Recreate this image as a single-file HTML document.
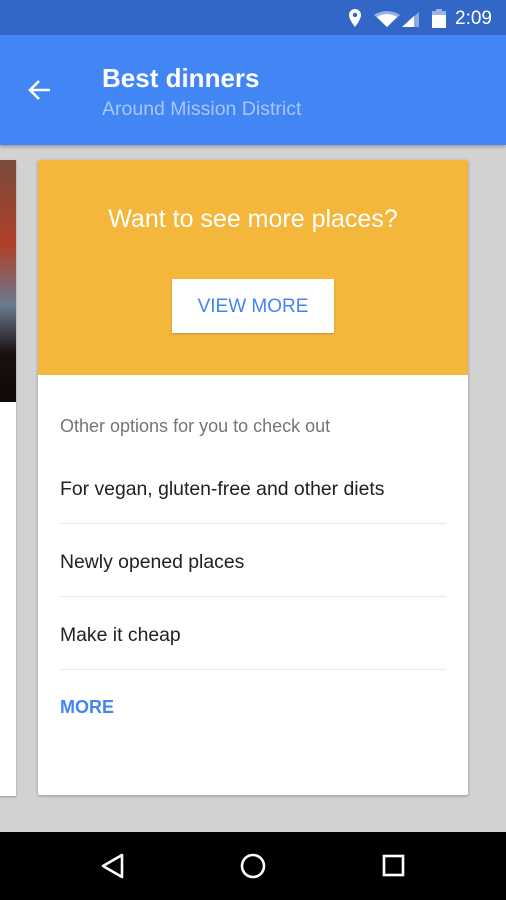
<!DOCTYPE html>
<html><head><style>
body{margin:0;width:506px;height:900px;position:relative;overflow:hidden;background:#d2d2d2;font-family:"Liberation Sans",sans-serif}
.abs{position:absolute}
</style></head><body>
<div class="abs" style="left:0;top:0;width:506px;height:35px;background:#3367c7"></div>
<div class="abs" style="left:0;top:35px;width:506px;height:110px;background:#4285f4;box-shadow:0 2px 3px rgba(0,0,0,.25)"></div>
<svg class="abs" style="left:344px;top:8px" width="130" height="22" viewBox="0 0 130 22">
<path d="M11 1a6 6 0 0 0-6 6c0 4.5 6 12 6 12s6-7.5 6-12a6 6 0 0 0-6-6zm0 8.2a2.2 2.2 0 1 1 0-4.4 2.2 2.2 0 0 1 0 4.4z" fill="#fff"/>
<path d="M30 7a24 24 0 0 1 26 0l-13 12z" fill="#fff" opacity=".5"/>
<path d="M33 9a19 19 0 0 1 20 0l-10 10z" fill="#fff"/>
<path d="M58 19l17-15v15z" fill="#fff" opacity=".45"/>
<path d="M58 19l12-11v11z" fill="#fff"/>
<rect x="88" y="3" width="14" height="17" fill="#fff" opacity=".5"/>
<rect x="92" y="1" width="6" height="2" fill="#fff" opacity=".5"/>
<rect x="88" y="7" width="14" height="13" fill="#fff"/>
</svg>
<div class="abs" style="left:455px;top:8px;color:#fff;font-size:19px">2:09</div>
<svg class="abs" style="left:26px;top:78px" width="26" height="24" viewBox="0 0 26 24"><path d="M24 12H4M13 3l-9 9 9 9" stroke="#fff" stroke-width="2.6" fill="none"/></svg>
<div class="abs" style="left:102px;top:63px;color:#fff;font-size:26px;font-weight:bold">Best dinners</div>
<div class="abs" style="left:102px;top:98px;color:#a7c6f9;font-size:19.5px">Around Mission District</div>
<div class="abs" style="left:0;top:160px;width:16px;height:636px;background:#fff;box-shadow:0 1px 2px rgba(0,0,0,.3)"></div>
<div class="abs" style="left:0;top:160px;width:16px;height:242px;background:linear-gradient(#7a4a3a,#b0402a 35%,#6a7a90 60%,#1a1010 80%,#100808)"></div>
<div class="abs" style="left:38px;top:160px;width:430px;height:635px;background:#fff;border-radius:2px;box-shadow:0 1px 3px rgba(0,0,0,.3)"></div>
<div class="abs" style="left:38px;top:160px;width:430px;height:215px;background:#f4b73c;border-radius:2px 2px 0 0"></div>
<div class="abs" style="left:38px;top:205px;width:430px;text-align:center;color:#fff;font-size:25px">Want to see more places?</div>
<div class="abs" style="left:172px;top:279px;width:162px;height:54px;background:#fff;color:#4285f4;font-size:19px;line-height:56px;text-align:center;box-shadow:0 1px 2px rgba(0,0,0,.2)">VIEW MORE</div>
<div class="abs" style="left:60px;top:416px;color:#757575;font-size:18px">Other options for you to check out</div>
<div class="abs" style="left:60px;top:478px;color:#212121;font-size:19.4px">For vegan, gluten-free and other diets</div>
<div class="abs" style="left:60px;top:523px;width:386px;height:1px;background:#e8e8e8"></div>
<div class="abs" style="left:60px;top:551px;color:#212121;font-size:19.4px">Newly opened places</div>
<div class="abs" style="left:60px;top:596px;width:386px;height:1px;background:#e8e8e8"></div>
<div class="abs" style="left:60px;top:624px;color:#212121;font-size:19.4px">Make it cheap</div>
<div class="abs" style="left:60px;top:669px;width:386px;height:1px;background:#e8e8e8"></div>
<div class="abs" style="left:60px;top:697px;color:#4285f4;font-size:18px;font-weight:bold">MORE</div>
<div class="abs" style="left:0;top:832px;width:506px;height:68px;background:#000"></div>
<svg class="abs" style="left:0;top:832px" width="506" height="68" viewBox="0 0 506 68">
<path d="M122 23v22l-19-11z" stroke="#fff" stroke-width="2.6" fill="none" stroke-linejoin="round"/>
<circle cx="253" cy="34" r="11" stroke="#fff" stroke-width="2.6" fill="none"/>
<rect x="384" y="24" width="19" height="19" stroke="#fff" stroke-width="2.6" fill="none"/>
</svg>
</body></html>
